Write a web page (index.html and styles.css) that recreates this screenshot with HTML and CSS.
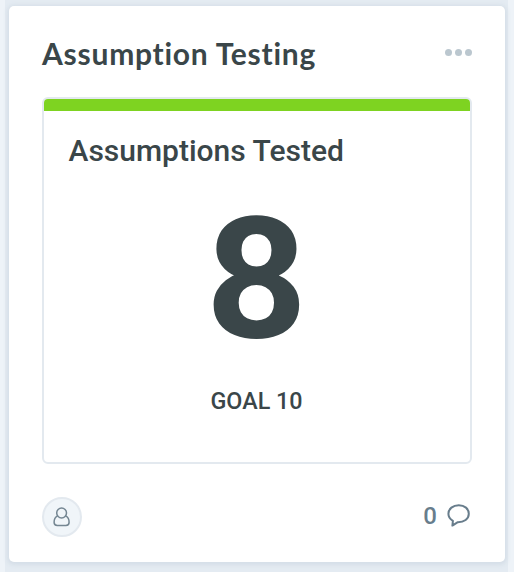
FILE: index.html
```html
<!DOCTYPE html>
<html lang="en">
<head>
<meta charset="utf-8">
<title>Assumption Testing</title>
<link rel="stylesheet" href="styles.css">
</head>
<body>
<main class="column">
  <article class="card">
    <header class="card-header">
      <h1 class="card-title">Assumption Testing</h1>
      <div class="menu"><i class="dot"></i><i class="dot"></i><i class="dot"></i></div>
    </header>
    <section class="metric">
      <div class="metric-bar"></div>
      <h2 class="metric-title">Assumptions Tested</h2>
      <div class="metric-value">8</div>
      <div class="metric-goal">GOAL 10</div>
    </section>
    <footer class="card-footer">
      <div class="avatar">
        <svg width="18" height="20" viewBox="0 0 18 20"><circle cx="8.6" cy="6" r="4.9"/><path d="M4.4 8.8C2 10 1.1 12 1.1 15.2C1.1 17.4 2.1 18.4 4.3 18.4H12.9C15.1 18.4 16.1 17.4 16.1 15.2C16.1 12 15.2 10 12.8 8.8"/></svg>
      </div>
      <div class="comments">
        <span class="comment-count">0</span>
        <svg width="24" height="24" viewBox="0 0 24 24"><path d="M11.8 1.2C6 1.2 1.4 4.8 1.4 9.8C1.4 12.8 3 15.2 5.9 16.9L5.4 21.6L10.4 18.3C17.2 18.5 21.8 14.9 21.8 9.8C21.8 4.8 17.6 1.2 11.8 1.2Z"/></svg>
      </div>
    </footer>
  </article>
</main>
</body>
</html>
```

FILE: styles.css
```css
* { box-sizing: border-box; }
body {
  margin: 0;
  height: 572px;
  padding: 0 6px 0 5px;
  overflow: hidden;
  background: #eef3f8;
  color: #3a4649;
  font-family: Roboto, "Liberation Sans", sans-serif;
}
.column {
  height: 572px;
  padding: 6px 3px 10px 4px;
  background: #e4ebf2;
}
.card {
  height: 556px;
  padding: 26px 33px 25px;
  display: flex;
  flex-direction: column;
  background: #fff;
  border-radius: 5px;
  box-shadow: 0 1px 4px 2px #d5dee7;
}
.card-header {
  height: 65px;
  display: flex;
  justify-content: space-between;
}
.card-title {
  margin: 0;
  font: 700 30px/42px Lato, sans-serif;
  letter-spacing: 0.75px;
  white-space: nowrap;
}
.menu { display: flex; gap: 3px; padding-top: 17px; }
.dot { width: 7px; height: 7px; border-radius: 50%; background: #bbc7cf; }
.metric {
  height: 367px;
  border: 2px solid #e3e9ef;
  border-radius: 6px;
  overflow: hidden;
  text-align: center;
}
.metric-bar { height: 12px; background: #7ed321; }
.metric-title {
  margin: 22px 0 0 24.5px;
  font-size: 30px;
  line-height: 36px;
  font-weight: 480;
  text-align: left;
  white-space: nowrap;
}
.metric-value {
  margin: 23px 1px 0 0;
  font-size: 169px;
  line-height: 174px;
  font-weight: 740;
  transform: scaleX(1.05);
}
.metric-goal {
  margin: 20px 1px 0 0;
  font-size: 23.3px;
  line-height: 30px;
  font-weight: 480;
}
.card-footer {
  height: 40px;
  margin-top: 33px;
  display: flex;
  justify-content: space-between;
}
.avatar {
  width: 40px;
  height: 40px;
  display: flex;
  align-items: center;
  justify-content: center;
  border: 2px solid #e3e9ef;
  border-radius: 50%;
  background: #f0f5f9;
}
svg { fill: none; stroke: #748692; stroke-width: 1.5; stroke-linejoin: round; }
.comments { display: flex; align-items: center; gap: 10px; margin: -2px 1px 0 0; }
.comments svg { stroke: #687d8c; stroke-width: 2; }
.comment-count {
  color: #687d8c;
  font-size: 24px;
  font-weight: 500;
  line-height: 30px;
}
```
